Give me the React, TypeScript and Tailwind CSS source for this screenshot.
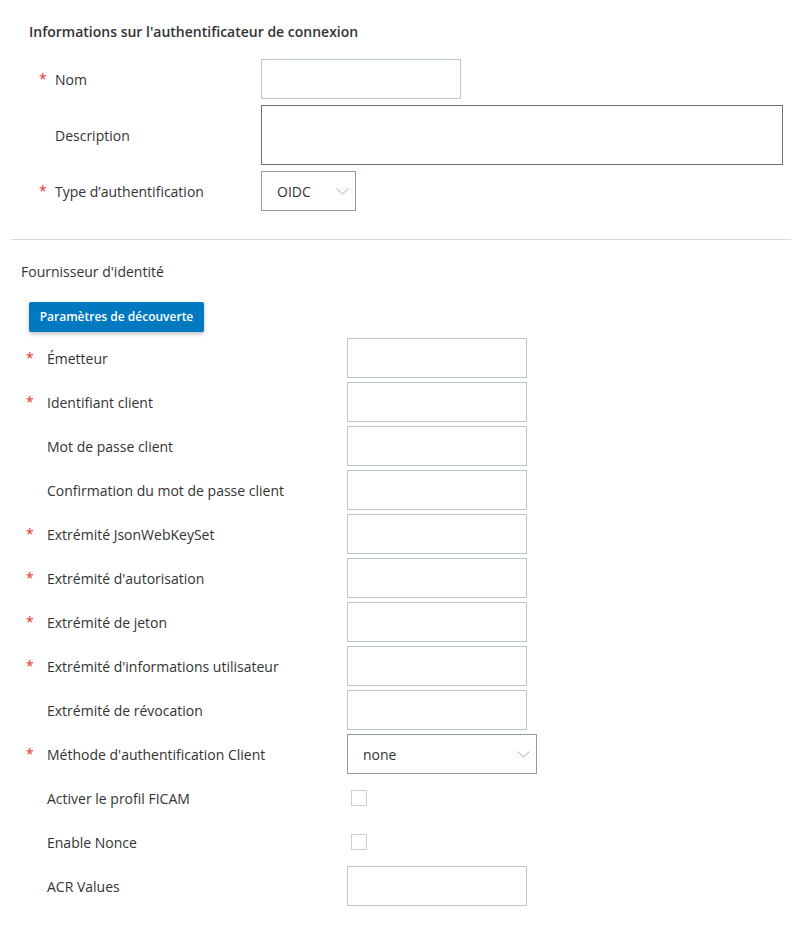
import React from "react";

const Chevron = () => (
  <svg width="13" height="7" viewBox="0 0 13 7" fill="none" className="shrink-0">
    <path d="M0.5 0.5 L6.5 6 L12.5 0.5" stroke="#a3adb7" strokeWidth="1" />
  </svg>
);

const Star = ({ show }: { show: boolean }) => (
  <span className="text-[#e4322b] text-[14px] leading-none">{show ? "*" : ""}</span>
);

const TextInput = ({ w }: { w: string }) => (
  <input type="text" className={`${w} h-[40px] border border-[#bcc6cd] bg-white outline-none`} />
);

const Select = ({ value, w }: { value: string; w: string }) => (
  <div className={`${w} h-[40px] border border-[#8e9aa6] flex items-center justify-between pl-[15px] pr-[6px] text-[#333]`}>
    <span className="pt-[2px]">{value}</span>
    <Chevron />
  </div>
);

const Checkbox = () => (
  <div className="ml-[4px] w-[16px] h-[16px] border border-[#c7d0d7] bg-white" />
);

type Field = { label: string; required: boolean; kind: "input" | "select" | "check"; value?: string };

const providerFields: Field[] = [
  { label: "Émetteur", required: true, kind: "input" },
  { label: "Identifiant client", required: true, kind: "input" },
  { label: "Mot de passe client", required: false, kind: "input" },
  { label: "Confirmation du mot de passe client", required: false, kind: "input" },
  { label: "Extrémité JsonWebKeySet", required: true, kind: "input" },
  { label: "Extrémité d'autorisation", required: true, kind: "input" },
  { label: "Extrémité de jeton", required: true, kind: "input" },
  { label: "Extrémité d'informations utilisateur", required: true, kind: "input" },
  { label: "Extrémité de révocation", required: false, kind: "input" },
  { label: "Méthode d'authentification Client", required: true, kind: "select", value: "none" },
  { label: "Activer le profil FICAM", required: false, kind: "check" },
  { label: "Enable Nonce", required: false, kind: "check" },
  { label: "ACR Values", required: false, kind: "input" },
];

export default function App() {
  return (
    <div className="w-[800px] min-h-[935px] bg-white font-['Open_Sans',sans-serif] text-[14px] leading-[20px] text-[#333]">
      {/* Connection authenticator */}
      <section className="pt-[22px]">
        <h2 className="pl-[29px] font-semibold text-[#333]">
          Informations sur l'authentificateur de connexion
        </h2>
        <div className="mt-[17px] flex flex-col gap-[6px]">
          <div className="flex items-center pl-[39px]">
            <div className="w-[16px]"><Star show /></div>
            <label className="w-[206px] pt-[2px]">Nom</label>
            <TextInput w="w-[200px]" />
          </div>
          <div className="flex items-center pl-[39px]">
            <div className="w-[16px]" />
            <label className="w-[206px] pt-[2px]">Description</label>
            <textarea className="w-[522px] h-[60px] border border-[#707070] resize-none outline-none" />
          </div>
          <div className="flex items-center pl-[39px]">
            <div className="w-[16px]"><Star show /></div>
            <label className="w-[206px] pt-[2px]">Type d’authentification</label>
            <Select value="OIDC" w="w-[95px]" />
          </div>
        </div>
      </section>

      <div className="mt-[28px] mx-[11px] w-[780px] h-px bg-[#d6dde3]" />

      {/* Identity provider */}
      <section className="pt-[21px] pb-[30px]">
        <h2 className="pl-[21px] pt-[1px] font-medium text-[#333]">Fournisseur d'identité</h2>
        <div className="mt-[20px] pl-[29px]">
          <button className="w-[175px] h-[30px] rounded-[2px] bg-[#0079c1] text-white text-[12px] font-semibold shadow-[0_2px_4px_rgba(0,0,0,0.25)]">
            Paramètres de découverte
          </button>
        </div>
        <div className="mt-[6px] flex flex-col gap-[4px]">
          {providerFields.map((f) => (
            <div key={f.label} className="flex items-center h-[40px] pl-[26px]">
              <div className="w-[21px]"><Star show={f.required} /></div>
              <label className="w-[300px] pt-[2px]">{f.label}</label>
              {f.kind === "input" && <TextInput w="w-[180px]" />}
              {f.kind === "select" && <Select value={f.value ?? ""} w="w-[190px]" />}
              {f.kind === "check" && <Checkbox />}
            </div>
          ))}
        </div>
      </section>
    </div>
  );
}
